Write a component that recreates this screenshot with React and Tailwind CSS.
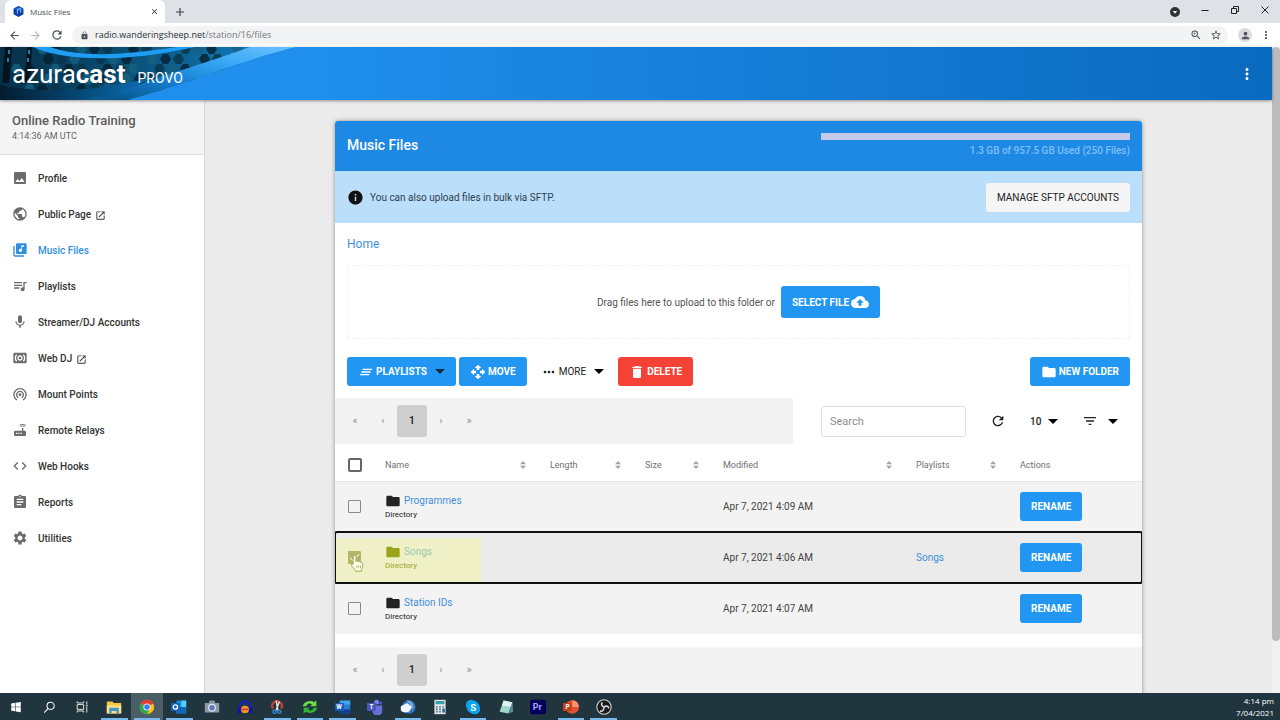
import React, { useState } from 'react';
import {
    MdImage, MdPublic, MdLibraryMusic, MdQueueMusic, MdMic, MdSurroundSound, MdWifiTethering, MdRouter,
    MdCode, MdAssignment, MdSettings, MdOpenInNew, MdInfo, MdCloudUpload, MdClearAll, MdOpenWith,
    MdMoreHoriz, MdMoreVert, MdDelete, MdFolder, MdRefresh, MdFilterList, MdArrowBack, MdArrowForward,
    MdLock, MdStarBorder, MdPerson, MdAdd, MdClose, MdZoomIn, MdCheck,
} from 'react-icons/md';

const NAV_ITEMS = [
    { label: 'Profile', Icon: MdImage },
    { label: 'Public Page', Icon: MdPublic, external: true },
    { label: 'Music Files', Icon: MdLibraryMusic, active: true },
    { label: 'Playlists', Icon: MdQueueMusic },
    { label: 'Streamer/DJ Accounts', Icon: MdMic },
    { label: 'Web DJ', Icon: MdSurroundSound, external: true },
    { label: 'Mount Points', Icon: MdWifiTethering },
    { label: 'Remote Relays', Icon: MdRouter },
    { label: 'Web Hooks', Icon: MdCode },
    { label: 'Reports', Icon: MdAssignment },
    { label: 'Utilities', Icon: MdSettings },
];

const COLUMNS = [
    { label: 'Name', width: 'w-[165px]' },
    { label: 'Length', width: 'w-[95px]' },
    { label: 'Size', width: 'w-[78px]' },
    { label: 'Modified', width: 'w-[193px]' },
    { label: 'Playlists', width: 'w-[104px]' },
];

const FILES = [
    { name: 'Programmes', modified: 'Apr 7, 2021 4:09 AM' },
    { name: 'Songs', modified: 'Apr 7, 2021 4:06 AM', playlist: 'Songs' },
    { name: 'Station IDs', modified: 'Apr 7, 2021 4:07 AM' },
];

const BTN = 'inline-flex items-center min-h-[29px] px-[11px] rounded-[3px] text-[10px] uppercase whitespace-nowrap';
const BTN_BLUE = `${BTN} bg-[#2196f3] text-white font-bold`;

const Caret = ({ className = '' }) => (
    <svg viewBox="0 0 10 5" className={`w-[10px] h-[5px] ${className}`} fill="currentColor" aria-hidden="true">
        <path d="M0 0h10L5 5z" />
    </svg>
);

const BrowserChrome = () => (
    <div className="shrink-0 font-['Open_Sans',sans-serif]">
        <div className="flex h-[23px] bg-[#dee1e6] pl-[5px]">
            <div className="flex items-center w-40 bg-white rounded-t-md pl-2 pr-1.5">
                <svg viewBox="0 0 20 20" className="w-[11px] h-[11px]" aria-hidden="true">
                    <path d="M10 0l9 5v10l-9 5-9-5V5z" fill="#0b3fa8" />
                    <path d="M10 0l9 5-9 5-9-5z" fill="#1557d0" />
                    <path d="M8 14V6l6-1v7" stroke="#9ed4ff" strokeWidth="1.6" fill="none" />
                </svg>
                <span className="flex-1 ml-1.5 text-[8px] text-[#45494d]">Music Files</span>
                <button aria-label="Close tab"><MdClose className="w-[9px] h-[9px] text-[#333]" /></button>
            </div>
            <button aria-label="New tab" className="ml-2"><MdAdd className="w-3.5 h-3.5 text-[#3c4043]" /></button>
            <div className="flex items-center gap-5 ml-auto pr-2.5 pb-1 text-[#222]">
                <svg viewBox="0 0 10 10" className="w-2.5 h-2.5 mt-1" aria-hidden="true">
                    <circle cx="5" cy="5" r="5" fill="#2f3337" />
                    <path d="M2.800 3.900h4.400L5 6.800z" fill="#fff" />
                </svg>
                <button aria-label="Minimize" className="w-2.5">
                    <svg viewBox="0 0 10 10" className="w-2.5 h-2.5" stroke="currentColor"><path d="M1.5 5.5h7" /></svg>
                </button>
                <button aria-label="Restore" className="w-2.5">
                    <svg viewBox="0 0 10 10" className="w-2.5 h-2.5" stroke="currentColor" fill="none">
                        <path d="M1.5 3.5h5v5h-5zM3.5 3.5v-2h5v5h-2" />
                    </svg>
                </button>
                <button aria-label="Close" className="w-2.5">
                    <svg viewBox="0 0 10 10" className="w-2.5 h-2.5" stroke="currentColor"><path d="M1.5 1.5l7 7M8.5 1.5l-7 7" /></svg>
                </button>
            </div>
        </div>
        <div className="flex items-center h-6 bg-white px-2 text-[#505458]">
            <button aria-label="Back"><MdArrowBack className="w-[13px] h-[13px]" /></button>
            <button aria-label="Forward" className="ml-2 text-[#b4b7ba]"><MdArrowForward className="w-[13px] h-[13px]" /></button>
            <button aria-label="Reload" className="ml-2"><MdRefresh className="w-3.5 h-3.5" /></button>
            <div className="flex flex-1 items-center h-[18px] ml-2 mr-2.5 pl-2 pr-1.5 rounded-full bg-[#f1f3f4]">
                <MdLock className="w-[9px] h-[9px]" />
                <span className="flex-1 ml-1.5 text-[9px] text-[#75797d]">
                    <span className="text-[#2d3033]">radio.wanderingsheep.net</span>/station/16/files
                </span>
                <button aria-label="Zoom"><MdZoomIn className="w-3 h-3" /></button>
                <button aria-label="Bookmark" className="ml-2"><MdStarBorder className="w-3 h-3" /></button>
            </div>
            <button aria-label="Account" className="flex items-center justify-center w-3.5 h-3.5 rounded-full bg-[#dadce0]">
                <MdPerson className="w-[11px] h-[11px]" />
            </button>
            <button aria-label="Menu" className="ml-2"><MdMoreVert className="w-3 h-3" /></button>
        </div>
    </div>
);

// Honeycomb rows behind the logo
const HEXES = [];
for (let row = 0; row < 6; row++) {
    for (let col = 0; col < 18; col++) {
        if ((row * 7 + col * 5) % 4 !== 0) {
            HEXES.push([16 + col * 13 + (row % 2) * 6, row * 10 + 2, (row + col) % 3]);
        }
    }
}

const BannerArt = () => (
    <svg viewBox="0 0 300 53" className="absolute left-0 top-0 w-[300px] h-[53px]" aria-hidden="true">
        <defs>
            <linearGradient id="banner" x1="0" x2="1">
                <stop offset="0" stopColor="#063048" />
                <stop offset="0.5" stopColor="#0a4f76" />
                <stop offset="1" stopColor="#1178b4" />
            </linearGradient>
            <linearGradient id="swoosh" x1="0" y1="1" x2="1" y2="0">
                <stop offset="0.1" stopColor="#07598f" />
                <stop offset="0.4" stopColor="#1680d2" />
                <stop offset="0.7" stopColor="#3aa8f6" />
                <stop offset="1" stopColor="#6cc4ff" />
            </linearGradient>
            <linearGradient id="base" x1="0" x2="1">
                <stop offset="0" stopColor="#031c2e" />
                <stop offset="1" stopColor="#0a6fb4" />
            </linearGradient>
        </defs>
        <path d="M0 0H250C210 12 170 32 120 53H0z" fill="url(#banner)" />
        {HEXES.map(([x, y, tone], i) => (
            <path
                key={i}
                d={`M${x - 5} ${y}l3-5h5l3 5-3 5h-5z`}
                fill={tone === 0 ? '#04212f' : tone === 1 ? '#0a3448' : '#16607f'}
                opacity="0.8"
            />
        ))}
        <path d="M5 0h7l-3 36H2zM27 0h5l-2 34h-5z" fill="#03131f" />
        <path d="M8 3h2v4H8zM7 11h2v4H7zM28 3h2v4h-2zM27 11h2v4h-2z" fill="#1d7fae" />
        <path d="M0 38C50 48 100 43 150 31C130 44 100 50 80 53H0z" fill="url(#base)" />
        <path d="M250 0H296C240 14 185 38 128 53H80C115 48 150 33 185 22C210 14 235 6 250 0z" fill="url(#swoosh)" />
        <path d="M250 0H300V53H128C185 38 240 14 296 0z" fill="#1f8eec" />
        <path d="M33 0C60 13 120 17 195 0H176C120 9 80 10 50 0z" fill="#1e9df2" />
    </svg>
);

const Header = () => (
    <header className="relative z-10 flex items-center shrink-0 h-[53px] bg-gradient-to-r from-[#1f8eec] from-25% to-[#0a6abf] shadow-[0_1px_3px_rgba(0,0,0,0.4)]">
        <BannerArt />
        <a href="#" className="relative flex items-baseline ml-3 pt-1 text-white">
            <span className="text-[26px] leading-6">azura<b>cast</b></span>
            <span className="ml-3 text-[14px]">PROVO</span>
        </a>
        <button aria-label="Menu" className="ml-auto mr-4 text-white"><MdMoreVert className="w-[18px] h-[18px]" /></button>
    </header>
);

const Sidebar = () => (
    <aside className="shrink-0 w-[205px] bg-white border-r border-[#d8d8d8]">
        <div className="h-[55px] px-3 pt-3 bg-[#f5f5f5] border-b border-[#e0e0e0]">
            <div className="text-[13px] leading-[18px] font-medium text-[#5c5c5c]">Online Radio Training</div>
            <div className="text-[9px] leading-[13px] text-[#666]">4:14:36 AM UTC</div>
        </div>
        <nav className="pt-[5px]">
            {NAV_ITEMS.map(({ label, Icon, external, active }) => (
                <a
                    key={label}
                    href="#"
                    className={`flex items-center h-9 px-3 text-[10px] font-medium ${active ? 'text-[#2f8fe0]' : 'text-[#333]'}`}
                >
                    <Icon className={`w-4 h-4 mr-2.5 ${active ? '' : 'text-[#6b6b6b]'}`} />
                    {label}
                    {external && <MdOpenInNew className="w-[11px] h-[11px] ml-1 mt-0.5" />}
                </a>
            ))}
        </nav>
    </aside>
);

const Pagination = ({ label }) => (
    <nav aria-label={label} className="flex items-center h-[46px] pl-1.5 bg-[#f3f3f3] text-[11px] text-[#8f8f8f]">
        <button className="w-7" aria-label="First page">«</button>
        <button className="w-7" aria-label="Previous page">‹</button>
        <button className="w-[30px] h-8 rounded-[3px] bg-[#cfcfcf] font-medium text-[#222]">1</button>
        <button className="w-7" aria-label="Next page">›</button>
        <button className="w-7" aria-label="Last page">»</button>
    </nav>
);

const SortIcon = () => (
    <svg viewBox="0 0 6 10" className="w-1.5 h-2.5" fill="#a3a3a3" aria-hidden="true">
        <path d="M0 4.300h6L3 1zM0 5.700h6L3 9z" />
    </svg>
);

const HandCursor = () => (
    <svg viewBox="0 0 20 24" className="absolute left-[15px] top-[22px] w-[15px] h-[18px] z-10" aria-hidden="true">
        <path
            d="M6 2c1.200 0 2 .8 2 2v6c.5-1 3-.8 3.200.5.8-.9 2.700-.6 3 .8.9-.6 2.800 0 2.800 1.700V16c0 3-2 4-2 7H7.500c0-2-5-6-5.500-8-.4-1.500 1-2.300 2.200-1.200V4c0-1.200.7-2 1.800-2z"
            fill="#fffff0"
            stroke="#a3a552"
            strokeWidth="1.300"
        />
        <path d="M9 15v4M11.500 15v4M14 15v4" stroke="#a3a552" strokeWidth="1" />
    </svg>
);

const FileTable = () => {
    const [selected, setSelected] = useState(['Songs']);

    const toggle = (name) => {
        setSelected(selected.includes(name) ? selected.filter((n) => n !== name) : [...selected, name]);
    };

    return (
        <table className="w-full table-fixed border-collapse text-left text-[10px]">
            <thead>
                <tr className="h-[37px] text-[9px] text-[#707070] border-b border-[#e4e4e4]">
                    <th className="w-[38px] pl-[13px] pt-1.5">
                        <input type="checkbox" aria-label="Select all" className="block appearance-none w-3.5 h-3.5 border-2 border-[#666] rounded-[2px]" />
                    </th>
                    {COLUMNS.map((col) => (
                        <th key={col.label} className={`${col.width} px-3 pt-1.5 font-normal`}>
                            <div className="flex items-center justify-between">{col.label}<SortIcon /></div>
                        </th>
                    ))}
                    <th className="px-3 pt-1.5 font-normal">Actions</th>
                </tr>
            </thead>
            <tbody>
                {FILES.map((file) => {
                    const isSelected = selected.includes(file.name);
                    return (
                        <tr
                            key={file.name}
                            className={`h-[51px] text-[#444] ${isSelected ? 'relative bg-[#ebebeb] outline-2 -outline-offset-1 outline-[#111] rounded-[2px]' : 'bg-[#f3f3f3]'}`}
                        >
                            <td className="pl-[13px]">
                                {isSelected && <div className="absolute left-px top-1.5 w-[145px] h-11 bg-[#eff0c5]" />}
                                <div className="relative w-[13px] h-[13px]">
                                    <input
                                        type="checkbox"
                                        aria-label={`Select ${file.name}`}
                                        checked={isSelected}
                                        onChange={() => toggle(file.name)}
                                        className="block appearance-none w-full h-full border border-[#8a8a8a] rounded-[1px] checked:bg-[#b2b568] checked:border-[#b2b568]"
                                    />
                                    {isSelected && <MdCheck className="absolute inset-0 w-full h-full text-[#f4f5d0] pointer-events-none" />}
                                </div>
                                {isSelected && <HandCursor />}
                            </td>
                            <td className="px-3">
                                <div className={`relative ${isSelected ? 'text-[#9ca41c]' : 'text-[#222]'}`}>
                                    <div className="flex items-center">
                                        <MdFolder className="w-4 h-4 mr-[3px]" />
                                        <a href="#" className={isSelected ? 'text-[#9fc8b5]' : 'text-[#3f8fdd]'}>{file.name}</a>
                                    </div>
                                    <div className="text-[8px] leading-3">Directory</div>
                                </div>
                            </td>
                            <td />
                            <td />
                            <td className="px-3">{file.modified}</td>
                            <td className="px-3">{file.playlist && <a href="#" className="text-[#3f8fdd]">{file.playlist}</a>}</td>
                            <td className="px-3"><button className={BTN_BLUE}>Rename</button></td>
                        </tr>
                    );
                })}
            </tbody>
        </table>
    );
};

const MusicFiles = () => (
    <section className="mx-auto max-w-[807px] pb-6 bg-white rounded-[3px] overflow-hidden shadow-[0_0_4px_rgba(0,0,0,0.4)]">
        <div className="flex items-start justify-between h-[50px] px-3 pt-3 bg-[#1e88e5] text-white">
            <h2 className="text-[14px] leading-6 font-medium">Music Files</h2>
            <div className="w-[309px] text-right">
                <div role="progressbar" aria-label="Storage used" className="h-[7px] bg-[#c5cae9]" />
                <div className="mt-1 text-[10px] leading-[14px] font-medium text-[#7fc1fa]">1.3 GB of 957.5 GB Used (250 Files)</div>
            </div>
        </div>

        <div className="flex items-center h-[52px] px-3 bg-[#bbdefb] text-[10px] text-[#2f3f4c]">
            <MdInfo className="w-[17px] h-[17px] mr-1.5 text-[#111]" />
            <span className="flex-1">You can also upload files in bulk via SFTP.</span>
            <a href="#" className={`${BTN} bg-[#f5f5f5] text-[#222]`}>Manage SFTP Accounts</a>
        </div>

        <div className="px-3">
            <div className="py-3 text-[12px] leading-[18px]"><a href="#" className="text-[#3f8fdd]">Home</a></div>
            <div className="flex items-center justify-center h-[74px] border border-dashed border-[#f2f2f2] text-[10px] text-[#555]">
                Drag files here to upload to this folder or
                <button className={`${BTN_BLUE} h-8 ml-1.5`}>
                    Select File <MdCloudUpload className="w-[18px] h-[18px] ml-0.5" />
                </button>
            </div>
            <div className="flex items-center gap-[3px] mt-[18px] mb-3">
                <button className={BTN_BLUE} aria-haspopup="menu">
                    <MdClearAll className="w-4 h-4 mr-0.5" />Playlists<Caret className="ml-2 text-[#12283c]" />
                </button>
                <button className={BTN_BLUE}><MdOpenWith className="w-4 h-4 mr-0.5" />Move</button>
                <button className={`${BTN} text-[#222]`} aria-haspopup="menu">
                    <MdMoreHoriz className="w-4 h-4 mr-0.5" />More<Caret className="ml-2 text-black" />
                </button>
                <button className={`${BTN} bg-[#f44336] text-white font-bold`}><MdDelete className="w-4 h-4 mr-0.5" />Delete</button>
                <button className={`${BTN_BLUE} ml-auto`}><MdFolder className="w-4 h-4 mr-0.5" />New Folder</button>
            </div>
        </div>

        <div className="flex items-center">
            <div className="w-[57%]"><Pagination label="Files, top" /></div>
            <div className="flex flex-1 items-center pl-7 pr-6 text-[#222]">
                <input
                    type="text"
                    aria-label="Search"
                    placeholder="Search"
                    className="w-[145px] h-[31px] px-2 border border-[#dedede] rounded-[3px] text-[11px] placeholder:text-[#8c8c8c]"
                />
                <button aria-label="Refresh" className="ml-6"><MdRefresh className="w-4 h-4" /></button>
                <label className="relative flex items-center ml-6">
                    <select aria-label="Rows per page" className="appearance-none w-7 text-[10px] font-medium">
                        <option>10</option>
                        <option>25</option>
                    </select>
                    <Caret className="absolute right-0 pointer-events-none text-black" />
                </label>
                <button aria-label="Columns" className="flex items-center gap-2.5 ml-6">
                    <MdFilterList className="w-4 h-4" /><Caret className="text-black" />
                </button>
            </div>
        </div>

        <FileTable />
        <div className="mt-[13px]"><Pagination label="Files, bottom" /></div>
    </section>
);

const TASKS = [
    { name: 'Start', art: <path d="M4 5.500l5-.8v5H4zM9.700 4.600l6.300-1v6.100H9.700zM4 10.400h5v5l-5-.8zM9.700 10.400H16v6.100l-6.300-1z" fill="#fff" /> },
    { name: 'Search', art: <path d="M12 4a4.500 4.500 0 1 1 0 9 4.500 4.500 0 0 1 0-9zM8.800 12L4 17" fill="none" stroke="#fff" strokeWidth="1.300" /> },
    { name: 'Task View', art: <path d="M4 7h8v6H4zM4 3v2h8V3M4 17v-2h8v2M16 3v4M16 10v7M14.500 8.500h3" fill="none" stroke="#e8e8e8" strokeWidth="1.200" /> },
    { name: 'File Explorer', open: true, art: <><path d="M1 3h7l2 2h9v13H1z" fill="#f5c646" /><path d="M1 8h18v10H1z" fill="#ffe08a" /><path d="M4 11h12v7h-3v-3H7v3H4z" fill="#4196c9" /></> },
    { name: 'Chrome', open: true, current: true, art: <><circle cx="10" cy="10" r="9" fill="#fbc116" /><path d="M10 10L2.200 5.500A9 9 0 0 1 17.800 5.500z" fill="#e33b2e" /><path d="M10 10L2.200 5.500A9 9 0 0 0 10 19l3-6z" fill="#2da94f" /><circle cx="10" cy="10" r="4.500" fill="#fff" /><circle cx="10" cy="10" r="3.500" fill="#3d7ff0" /></> },
    { name: 'Outlook', open: true, art: <><path d="M7 2h12v16H7z" fill="#1d8fe0" /><path d="M13 2h6v8h-6z" fill="#50d0fa" /><path d="M6 10l13 0v8H6z" fill="#1268b8" /><path d="M0 5h11v10H0z" fill="#0a63b8" /><circle cx="5.500" cy="10" r="2.700" fill="none" stroke="#fff" strokeWidth="1.700" /></> },
    { name: 'Camera', art: <><path d="M1 5h5l1-3h6l1 3h5v12H1z" fill="#8d98a6" /><circle cx="10" cy="11" r="5" fill="#dfe7f2" /><circle cx="10" cy="11" r="3.500" fill="#6479b8" /></> },
    { name: 'Audacity', art: <><path d="M3.500 14V9.500a6.500 6.500 0 0 1 13 0V14" fill="none" stroke="#1520d8" strokeWidth="2.500" /><path d="M1 10h4v8H1zM15 10h4v8h-4z" fill="#1016a8" /><ellipse cx="10" cy="13" rx="5" ry="4.500" fill="#f09a22" /><path d="M5.500 12h9v2h-9z" fill="#d9372c" /></> },
    { name: 'Snipping Tool', open: true, art: <><path d="M5 12a6 6 0 1 1 10 0" fill="none" stroke="#b8442f" strokeWidth="3" /><path d="M9 2l2 12M13 3l-4 11" stroke="#e8e8e8" strokeWidth="1.800" /><circle cx="7" cy="16" r="2" fill="none" stroke="#3187d8" strokeWidth="1.800" /><circle cx="13" cy="16" r="2" fill="none" stroke="#3187d8" strokeWidth="1.800" /></> },
    { name: 'Sync', open: true, art: <><path d="M1 9a9 8 0 0 1 14-5l3-2v7h-8l2.500-2c-3-2.500-6-1-7 2z" fill="#6ddc49" /><path d="M19 11a9 8 0 0 1-14 5l-3 2v-7h8l-2.500 2c3 2.500 6 1 7-2z" fill="#35b632" /></> },
    { name: 'Word', open: true, art: <><path d="M6 2h13v16H6z" fill="#2b7cd3" /><path d="M6 2h13v5H6z" fill="#41a5ee" /><path d="M6 13h13v5H6z" fill="#103f91" /><path d="M0 5h11v10H0z" fill="#185abd" /><text x="1.500" y="13" fontSize="8" fontWeight="700" fill="#fff">W</text></> },
    { name: 'Teams', art: <><circle cx="12" cy="4" r="3" fill="#7b83eb" /><circle cx="17" cy="5" r="2" fill="#5059c9" /><path d="M7 8h12v6a5 5 0 0 1-12 2z" fill="#6870d8" /><path d="M0 5h11v10H0z" fill="#4b53bc" /><text x="3" y="13" fontSize="8" fontWeight="700" fill="#fff">T</text></> },
    { name: 'Thunderbird', open: true, art: <><circle cx="11" cy="10" r="8.500" fill="#2f79c8" /><path d="M8 2c8-1 10 6 8 12-2-4-3-8-8-12z" fill="#7ba8d8" /><path d="M1 9l8-4 6 5-3 5c-4 3-9 2-11-1z" fill="#f4f7fa" /></> },
    { name: 'Calculator', art: <><path d="M3 1h14v18H3z" fill="#dfe6e8" /><path d="M4.500 2.500h11v4h-11z" fill="#36a3a6" /><path d="M5 9h2v2H5zM9 9h2v2H9zM13 9h2v2h-2zM5 12h2v2H5zM9 12h2v2H9zM5 15h2v2H5zM9 15h2v2H9z" fill="#597078" /><path d="M13 12h3v5h-3z" fill="#1f5f9c" /></> },
    { name: 'Skype', open: true, art: <><circle cx="7.500" cy="7.500" r="6.500" fill="#0aa5ec" /><circle cx="12.500" cy="12.500" r="6.500" fill="#0aa5ec" /><circle cx="10" cy="10" r="8" fill="#0aa5ec" /><text x="6.500" y="14.500" fontSize="12" fontWeight="700" fill="#fff">S</text></> },
    { name: 'Notepad', art: <><path d="M7 2l11 2-5 14-11-2z" fill="#9fd6cd" /><path d="M7 2l11 2-2 6-11-2z" fill="#dff2ee" /><path d="M18 4l1 12-6 2z" fill="#5b8c92" /></> },
    { name: 'Premiere', art: <><rect x="0" y="1" width="20" height="18" rx="3" fill="#00005b" /><text x="3.500" y="14" fontSize="11" fontWeight="700" fill="#b3a1ff">Pr</text></> },
    { name: 'PowerPoint', open: true, art: <><circle cx="11.500" cy="10" r="8.500" fill="#e0532f" /><path d="M11.500 1.500a8.500 8.500 0 0 1 8.500 8.500h-8.500z" fill="#ff8f6b" /><path d="M0 5h11v10H0z" fill="#c43e1c" /><text x="3" y="13" fontSize="8" fontWeight="700" fill="#fff">P</text></> },
    { name: 'OBS', open: true, art: <><circle cx="10" cy="10" r="9" fill="#1b1b1d" stroke="#d5d5d5" strokeWidth="1.300" /><path d="M10 10c-3-1-4-4-2-6M10 10c3-2 6-1 6 2M10 10c0 4-2 6-5 5" stroke="#d5d5d5" strokeWidth="2" fill="none" /></> },
];

const Taskbar = () => (
    <footer className="flex shrink-0 justify-between h-[27px] bg-[#20353e]">
        <div className="flex w-[620px]">
            {TASKS.map((task) => (
                <button
                    key={task.name}
                    aria-label={task.name}
                    className={`flex flex-1 items-center justify-center px-[3px] ${task.current ? 'bg-[#4b5d65]' : ''}`}
                >
                    <span className={`flex items-center justify-center w-full h-full border-b-2 ${task.open ? 'border-[#76b9ed]' : 'border-transparent'}`}>
                        <svg viewBox="0 0 20 20" className="w-4 h-4 mt-0.5" aria-hidden="true">{task.art}</svg>
                    </span>
                </button>
            ))}
        </div>
        <div className="mr-1.5 pt-0.5 text-right text-[8px] leading-3 text-white font-['Open_Sans',sans-serif]">
            <div>4:14 pm</div>
            <div>7/04/2021</div>
        </div>
    </footer>
);

const App = () => (
    <div className="flex flex-col h-screen overflow-hidden bg-[#ebebeb] font-[Roboto,sans-serif]">
        <BrowserChrome />
        <div className="flex flex-1 min-h-0">
            <div className="flex flex-col flex-1 min-w-0">
                <Header />
                <div className="flex flex-1 min-h-0">
                    <Sidebar />
                    <main className="flex-1 min-w-0 overflow-hidden pt-[21px] px-3"><MusicFiles /></main>
                </div>
            </div>
            <div className="shrink-0 w-2 bg-[#f1f1f1]">
                <div className="h-[92%] rounded-full bg-[#bcbcbc]" />
            </div>
        </div>
        <Taskbar />
    </div>
);

export default App;
